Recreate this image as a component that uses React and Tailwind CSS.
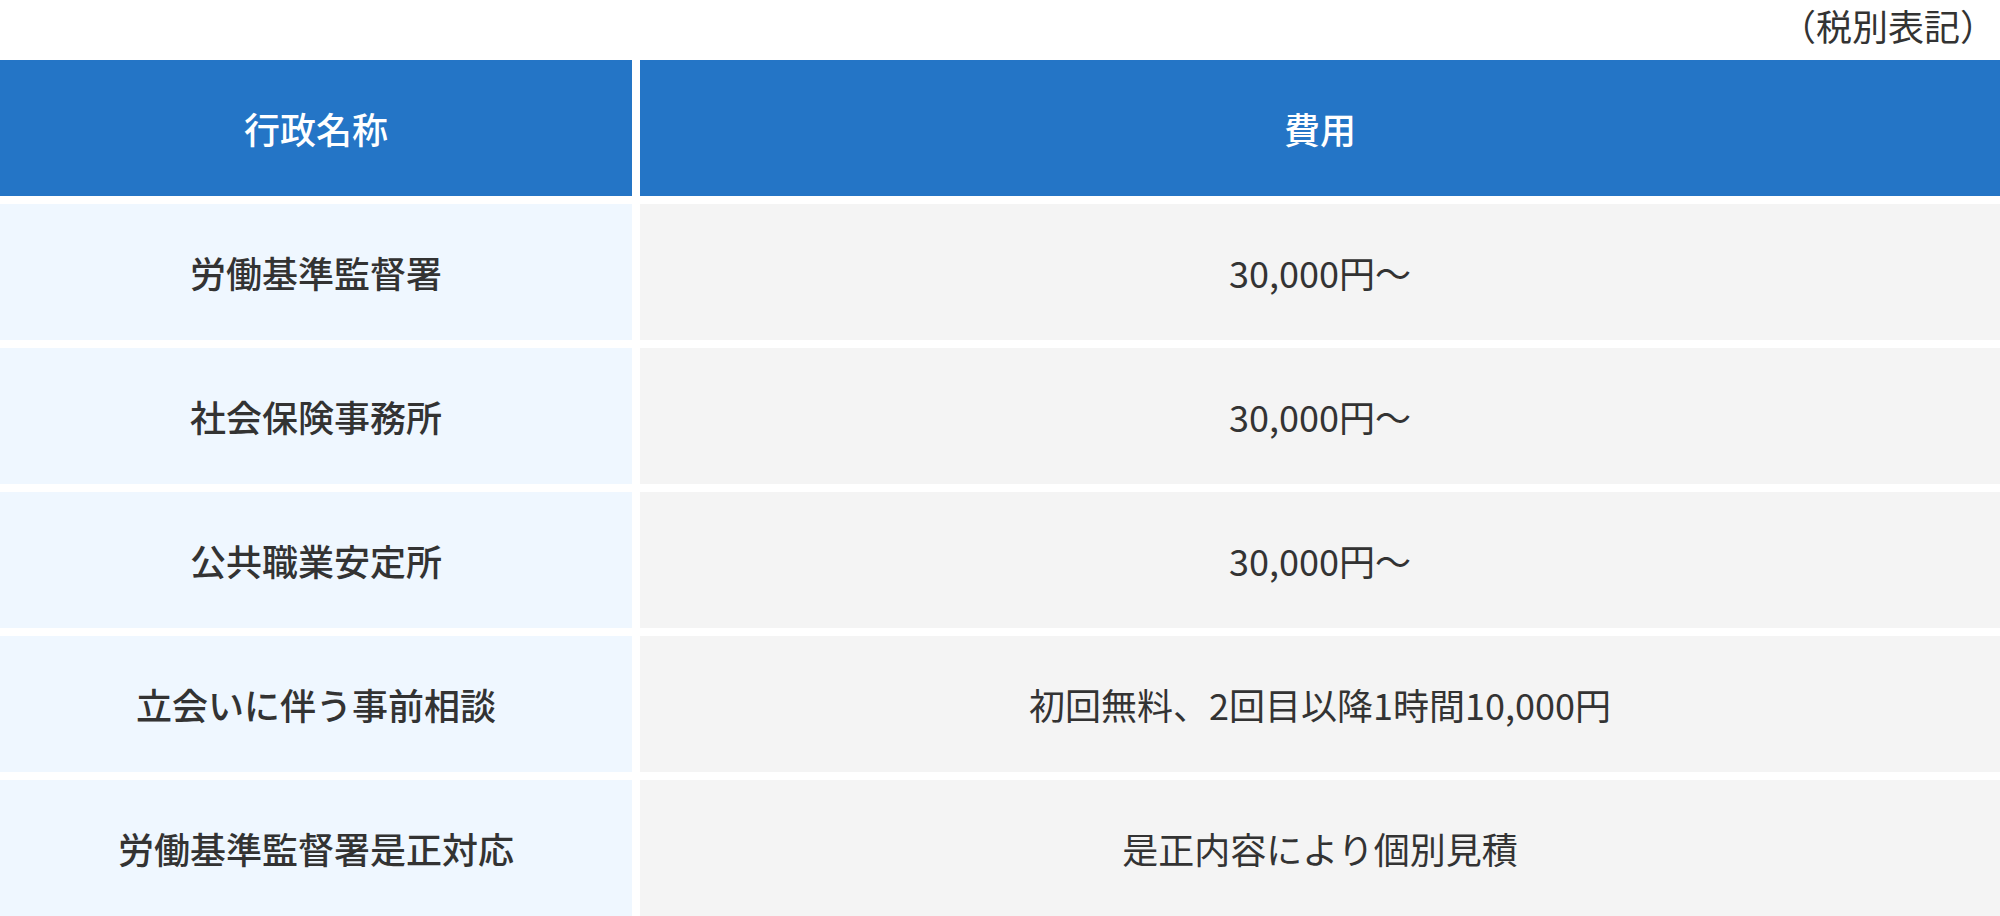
import React from "react";

const rows = [
  ["労働基準監督署", "30,000円～"],
  ["社会保険事務所", "30,000円～"],
  ["公共職業安定所", "30,000円～"],
  ["立会いに伴う事前相談", "初回無料、2回目以降1時間10,000円"],
  ["労働基準監督署是正対応", "是正内容により個別見積"],
];

export default function App() {
  return (
    <div
      className="w-[2000px] h-[916px] overflow-hidden bg-white text-[#333333]"
      style={{ fontFamily: '"Noto Sans CJK JP", "Noto Sans", sans-serif' }}
    >
      <div className="h-[60px] flex items-start justify-end pr-[4px]">
        <p className="text-[36px] leading-[50px] font-normal">（税別表記）</p>
      </div>
      <div className="grid grid-cols-[632px_1fr] gap-[8px]">
        <div className="h-[136px] bg-[#2475c6] flex items-center justify-center text-white text-[36px] font-medium">
          行政名称
        </div>
        <div className="h-[136px] bg-[#2475c6] flex items-center justify-center text-white text-[36px] font-medium">
          費用
        </div>
        {rows.map(([name, fee]) => (
          <React.Fragment key={name}>
            <div className="h-[136px] bg-[#eff7ff] flex items-center justify-center text-[36px] font-medium">
              {name}
            </div>
            <div className="h-[136px] bg-[#f4f4f4] flex items-center justify-center text-[36px] font-normal">
              {fee}
            </div>
          </React.Fragment>
        ))}
      </div>
    </div>
  );
}
